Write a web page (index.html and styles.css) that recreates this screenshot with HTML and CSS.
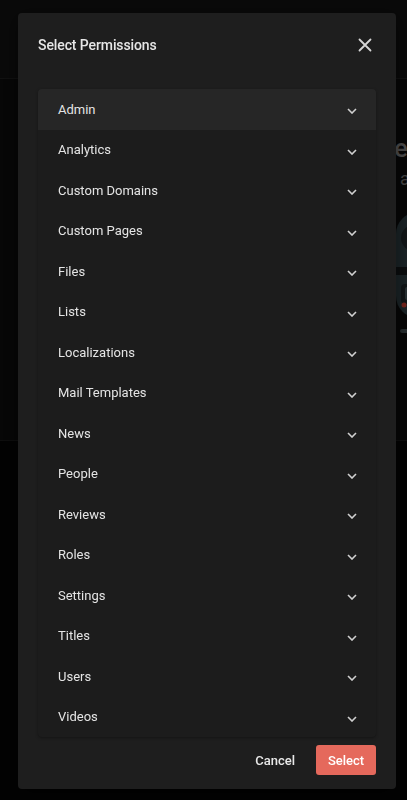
FILE: index.html
```html
<!DOCTYPE html>
<html>
<head>
<meta charset="utf-8">
<link rel="stylesheet" href="styles.css">
</head>
<body>
<div class="page">
  <header class="topbar"></header>
  <section class="hero">
    <h1 class="hero-title">Roles</h1>
    <p class="hero-sub">access</p>
    <div class="hero-art">
      <svg class="art" width="60" height="124" viewBox="0 0 60 124">
        <path d="M22 0 H60 V106 H22 A22 22 0 0 1 0 84 V22 A22 22 0 0 1 22 0 Z" fill="#2a383c"/>
        <circle cx="18" cy="26" r="13" fill="#1c2326"/>
        <circle cx="18" cy="26" r="7" fill="#3a4a4f"/>
        <rect x="0" y="55" width="60" height="8" fill="#111516"/>
        <rect x="5" y="72" width="30" height="20" rx="4" fill="#1c2326"/>
        <rect x="9" y="75" width="22" height="13" rx="2" fill="#3f4d52"/>
        <circle cx="8" cy="93" r="2.5" fill="#b8392c"/>
        <rect x="4" y="117" width="36" height="4" rx="2" fill="#3c4649"/>
      </svg>
    </div>
  </section>
  <section class="lower"></section>
</div>

<div class="overlay">
  <div class="dialog">
    <div class="dialog-head">
      <h2 class="dialog-title">Select Permissions</h2>
      <button class="close" aria-label="Close">
        <svg width="14" height="14" viewBox="0 0 14 14"><path d="M1.5 1.5 L12.5 12.5 M12.5 1.5 L1.5 12.5" stroke="#d6d6d6" stroke-width="1.8" stroke-linecap="round"/></svg>
      </button>
    </div>
    <ul class="perm-list">
      <li class="perm active"><span>Admin</span><svg class="chev" width="10" height="6" viewBox="0 0 10 6"><path d="M1 1 L5 5 L9 1" fill="none" stroke="#d0d0d0" stroke-width="1.6"/></svg></li>
      <li class="perm"><span>Analytics</span><svg class="chev" width="10" height="6" viewBox="0 0 10 6"><path d="M1 1 L5 5 L9 1" fill="none" stroke="#d0d0d0" stroke-width="1.6"/></svg></li>
      <li class="perm"><span>Custom Domains</span><svg class="chev" width="10" height="6" viewBox="0 0 10 6"><path d="M1 1 L5 5 L9 1" fill="none" stroke="#d0d0d0" stroke-width="1.6"/></svg></li>
      <li class="perm"><span>Custom Pages</span><svg class="chev" width="10" height="6" viewBox="0 0 10 6"><path d="M1 1 L5 5 L9 1" fill="none" stroke="#d0d0d0" stroke-width="1.6"/></svg></li>
      <li class="perm"><span>Files</span><svg class="chev" width="10" height="6" viewBox="0 0 10 6"><path d="M1 1 L5 5 L9 1" fill="none" stroke="#d0d0d0" stroke-width="1.6"/></svg></li>
      <li class="perm"><span>Lists</span><svg class="chev" width="10" height="6" viewBox="0 0 10 6"><path d="M1 1 L5 5 L9 1" fill="none" stroke="#d0d0d0" stroke-width="1.6"/></svg></li>
      <li class="perm"><span>Localizations</span><svg class="chev" width="10" height="6" viewBox="0 0 10 6"><path d="M1 1 L5 5 L9 1" fill="none" stroke="#d0d0d0" stroke-width="1.6"/></svg></li>
      <li class="perm"><span>Mail Templates</span><svg class="chev" width="10" height="6" viewBox="0 0 10 6"><path d="M1 1 L5 5 L9 1" fill="none" stroke="#d0d0d0" stroke-width="1.6"/></svg></li>
      <li class="perm"><span>News</span><svg class="chev" width="10" height="6" viewBox="0 0 10 6"><path d="M1 1 L5 5 L9 1" fill="none" stroke="#d0d0d0" stroke-width="1.6"/></svg></li>
      <li class="perm"><span>People</span><svg class="chev" width="10" height="6" viewBox="0 0 10 6"><path d="M1 1 L5 5 L9 1" fill="none" stroke="#d0d0d0" stroke-width="1.6"/></svg></li>
      <li class="perm"><span>Reviews</span><svg class="chev" width="10" height="6" viewBox="0 0 10 6"><path d="M1 1 L5 5 L9 1" fill="none" stroke="#d0d0d0" stroke-width="1.6"/></svg></li>
      <li class="perm"><span>Roles</span><svg class="chev" width="10" height="6" viewBox="0 0 10 6"><path d="M1 1 L5 5 L9 1" fill="none" stroke="#d0d0d0" stroke-width="1.6"/></svg></li>
      <li class="perm"><span>Settings</span><svg class="chev" width="10" height="6" viewBox="0 0 10 6"><path d="M1 1 L5 5 L9 1" fill="none" stroke="#d0d0d0" stroke-width="1.6"/></svg></li>
      <li class="perm"><span>Titles</span><svg class="chev" width="10" height="6" viewBox="0 0 10 6"><path d="M1 1 L5 5 L9 1" fill="none" stroke="#d0d0d0" stroke-width="1.6"/></svg></li>
      <li class="perm"><span>Users</span><svg class="chev" width="10" height="6" viewBox="0 0 10 6"><path d="M1 1 L5 5 L9 1" fill="none" stroke="#d0d0d0" stroke-width="1.6"/></svg></li>
      <li class="perm"><span>Videos</span><svg class="chev" width="10" height="6" viewBox="0 0 10 6"><path d="M1 1 L5 5 L9 1" fill="none" stroke="#d0d0d0" stroke-width="1.6"/></svg></li>
    </ul>
    <div class="dialog-foot">
      <button class="btn-cancel">Cancel</button>
      <button class="btn-select">Select</button>
    </div>
  </div>
</div>
</body>
</html>
```

FILE: styles.css
```css
* { box-sizing: border-box; }
html, body { margin: 0; padding: 0; }
body {
  background: #040404;
  font-family: Roboto, "Liberation Sans", sans-serif;
  width: 407px;
  height: 800px;
  overflow: hidden;
}
.page { display: flex; flex-direction: column; height: 800px; }
.topbar {
  height: 79px;
  background: #0f0f0f;
  border-bottom: 1px solid #1b1b1b;
}
.hero {
  height: 362px;
  background: #0b0b0b;
  border-bottom: 1px solid #161616;
  padding: 55px 0 0 358px;
  display: flex;
  flex-direction: column;
  overflow: hidden;
}
.hero-title {
  margin: 0;
  font-size: 25px;
  font-weight: 500;
  color: #787878;
  white-space: nowrap;
  line-height: 30px;
}
.hero-sub {
  margin: 5px 0 0 42px;
  font-size: 18px;
  color: #6a6a6a;
  white-space: nowrap;
  line-height: 20px;
}
.hero-art { margin: 23px 0 0 38px; display: flex; width: 60px; }
.art { flex-shrink: 0; display: block; }
.lower { flex: 1; background: #040404; }

.overlay {
  position: fixed;
  inset: 0;
  background: rgba(0, 0, 0, 0.35);
}
.dialog {
  position: absolute;
  left: 18px;
  top: 13px;
  width: 378px;
  height: 776px;
  background: #1e1e1e;
  border-radius: 4px;
  display: flex;
  flex-direction: column;
  box-shadow: 0 4px 20px rgba(0,0,0,0.5);
}
.dialog-head {
  display: flex;
  justify-content: space-between;
  align-items: flex-start;
  padding: 22px 20px 0 20px;
  height: 76px;
}
.dialog-title {
  margin: 0;
  font-size: 14px;
  font-weight: 500;
  color: #e6e6e6;
  line-height: 20px;
  letter-spacing: -0.1px;
}
.close {
  background: none;
  border: 0;
  padding: 0;
  margin: 3px 4px 0 0;
  width: 14px;
  height: 14px;
  display: flex;
}
.perm-list {
  list-style: none;
  margin: 0 20px;
  padding: 0;
  height: 648px;
  background: #1c1c1c;
  border-radius: 4px;
  overflow: hidden;
  box-shadow: 0 1px 3px rgba(0,0,0,0.35);
}
.perm {
  height: 40.5px;
  display: flex;
  align-items: center;
  justify-content: space-between;
  padding: 0 19px 0 20px;
  font-size: 13px;
  color: #e4e4e4;
}
.perm.active { background: #262626; }
.chev { margin-top: 4px; }
.dialog-foot {
  display: flex;
  justify-content: flex-end;
  align-items: center;
  gap: 13px;
  padding: 8px 20px 0 20px;
}
.btn-cancel {
  background: none;
  border: 0;
  font-family: inherit;
  font-size: 13px;
  font-weight: 500;
  color: #e8e8e8;
  padding: 0 8px;
  height: 30px;
}
.btn-select {
  background: #e5695c;
  border: 0;
  border-radius: 3px;
  font-family: inherit;
  font-size: 13px;
  font-weight: 500;
  color: #fff;
  width: 60px;
  height: 30px;
  padding: 0;
}
```
